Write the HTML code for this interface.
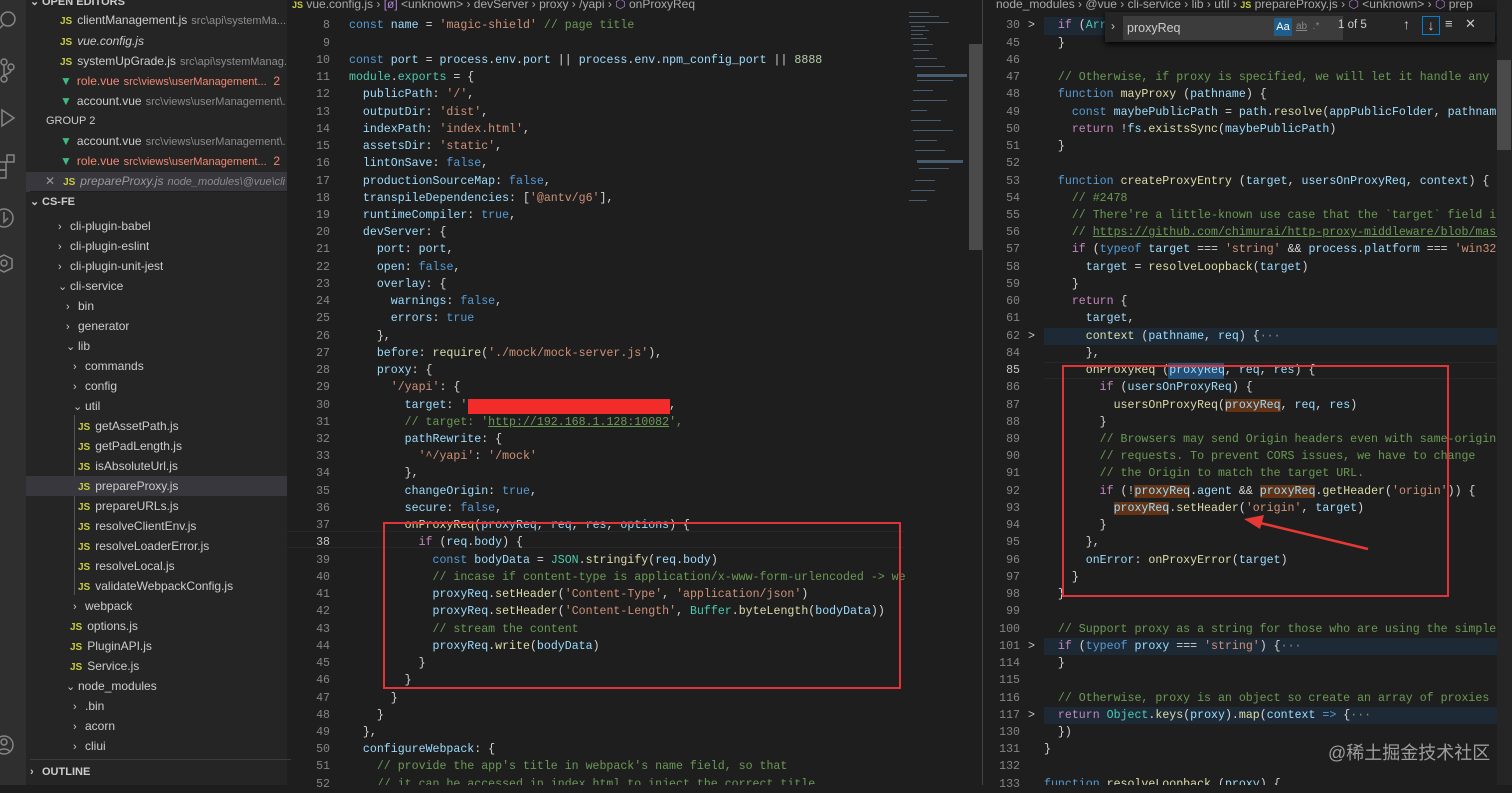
<!DOCTYPE html>
<html><head><meta charset="utf-8">
<style>
*{margin:0;padding:0;box-sizing:border-box}
body{width:1512px;height:785px;overflow:hidden;background:#1e1e1e;position:relative;font-family:"Liberation Sans",sans-serif}
#act{position:absolute;left:0;top:0;width:26px;height:785px;background:#2f2f2f}
#side{position:absolute;left:26px;top:0;width:261px;height:785px;background:#252526;color:#cccccc;font-size:12px}
.r{position:absolute;height:20px;line-height:20px;white-space:nowrap;overflow:hidden}
.js{color:#cbcb41;font-weight:bold;font-size:10px;margin-right:5px}
.v{color:#41b883;font-size:12px;margin-right:5px}
.p{color:#8c8c8c;font-size:11px;margin-left:4px}
.red{color:#f48771}
.ch{color:#c5c5c5;display:inline-block;width:12px;font-size:11px}
.hd{font-weight:bold;font-size:11px}
.ed{position:absolute;font-family:"Liberation Mono",monospace;font-size:11.6px;line-height:17.24px;white-space:pre;color:#d4d4d4}
.g{position:absolute;font-family:"Liberation Mono",monospace;font-size:11.6px;line-height:17.24px;color:#858585;text-align:right;white-space:pre}
.k{color:#569cd6}.c{color:#c586c0}.n{color:#9cdcfe}.s{color:#ce9178}.m{color:#6a9955}.f{color:#dcdcaa}.b{color:#b5cea8}.t{color:#4ec9b0}
.hl{background:#613214}
.bc{position:absolute;top:0;height:12px;font-size:12px;line-height:8px;color:#a9a9a9;white-space:nowrap;overflow:hidden}
.fa{position:absolute;left:1028px;font-family:"Liberation Mono",monospace;font-size:11.6px;line-height:17.24px;color:#c5c5c5}
</style></head><body>
<div id="act">
<svg width="26" height="785" style="position:absolute;left:0;top:0" fill="none" stroke="#858585" stroke-width="1.5">
<circle cx="8" cy="19" r="7"/><line x1="3" y1="25" x2="-2" y2="30"/>
<circle cx="4" cy="62" r="3"/><circle cx="11" cy="67" r="3"/><circle cx="4" cy="79" r="3"/><path d="M4 65v11M11 70c0 4-7 4-7 6"/>
<path d="M2 110l12 8-12 8z"/>
<rect x="-2" y="162" width="8" height="8"/><rect x="-2" y="170" width="8" height="8"/><rect x="7" y="155" width="7" height="7"/>
<circle cx="4" cy="218" r="9"/><path d="M4 212v10l4 -4"/>
<path d="M4 255l8 4v9l-8 4-8-4v-9z"/><circle cx="4" cy="263" r="3"/>
<circle cx="4" cy="745" r="9"/><circle cx="4" cy="742" r="3"/><path d="M-2 752c2-4 10-4 12 0"/>
</svg>
</div>
<div id="side">
<div class="r hd" style="top:-8px;left:4px"><span class="ch">⌄</span>OPEN EDITORS</div>
<div class="r" style="top:10px;left:34px;width:226px"><span class="js">JS</span>clientManagement.js<span class="p">src\api\systemMa...</span></div>
<div class="r" style="top:31px;left:34px"><span class="js">JS</span><i>vue.config.js</i></div>
<div class="r" style="top:51px;left:34px;width:226px"><span class="js">JS</span>systemUpGrade.js<span class="p">src\api\systemManag...</span></div>
<div class="r red" style="top:71px;left:34px"><span class="v">▼</span>role.vue<span class="p red">src\views\userManagement...</span>&nbsp; 2</div>
<div class="r" style="top:91px;left:34px;width:226px"><span class="v">▼</span>account.vue<span class="p">src\views\userManagement\...</span></div>
<div class="r" style="top:111px;left:20px;font-size:11px">GROUP 2</div>
<div class="r" style="top:131px;left:34px;width:226px"><span class="v">▼</span>account.vue<span class="p">src\views\userManagement\...</span></div>
<div class="r red" style="top:151px;left:34px"><span class="v">▼</span>role.vue<span class="p red">src\views\userManagement...</span>&nbsp; 2</div>
<div class="r" style="top:172px;left:0;width:261px;background:#37373d"></div>
<div class="r" style="top:171px;left:19px;width:240px;color:#999"><span style="margin-right:8px">✕</span><span class="js">JS</span><i>prepareProxy.js</i><span class="p"><i>node_modules\@vue\cli-...</i></span></div>
<div class="r hd" style="top:191px;left:4px;width:261px;border-top:1px solid #1e1e1e"><span class="ch">⌄</span>CS-FE</div>
<div class="r" style="top:216px;left:32px"><span class="ch">›</span>cli-plugin-babel</div>
<div class="r" style="top:236px;left:32px"><span class="ch">›</span>cli-plugin-eslint</div>
<div class="r" style="top:256px;left:32px"><span class="ch">›</span>cli-plugin-unit-jest</div>
<div class="r" style="top:276px;left:32px"><span class="ch">⌄</span>cli-service</div>
<div class="r" style="top:296px;left:40px"><span class="ch">›</span>bin</div>
<div class="r" style="top:316px;left:40px"><span class="ch">›</span>generator</div>
<div class="r" style="top:336px;left:40px"><span class="ch">⌄</span>lib</div>
<div class="r" style="top:356px;left:47px"><span class="ch">›</span>commands</div>
<div class="r" style="top:376px;left:47px"><span class="ch">›</span>config</div>
<div class="r" style="top:396px;left:47px"><span class="ch">⌄</span>util</div>
<div style="position:absolute;left:48px;top:415px;width:1px;height:180px;background:#555"></div>
<div class="r" style="top:476px;left:0;width:261px;background:#37373d"></div>
<div class="r" style="top:416px;left:52px"><span class="js">JS</span>getAssetPath.js</div>
<div class="r" style="top:436px;left:52px"><span class="js">JS</span>getPadLength.js</div>
<div class="r" style="top:456px;left:52px"><span class="js">JS</span>isAbsoluteUrl.js</div>
<div class="r" style="top:476px;left:52px"><span class="js">JS</span>prepareProxy.js</div>
<div class="r" style="top:496px;left:52px"><span class="js">JS</span>prepareURLs.js</div>
<div class="r" style="top:516px;left:52px"><span class="js">JS</span>resolveClientEnv.js</div>
<div class="r" style="top:536px;left:52px"><span class="js">JS</span>resolveLoaderError.js</div>
<div class="r" style="top:556px;left:52px"><span class="js">JS</span>resolveLocal.js</div>
<div class="r" style="top:576px;left:52px"><span class="js">JS</span>validateWebpackConfig.js</div>
<div class="r" style="top:596px;left:47px"><span class="ch">›</span>webpack</div>
<div class="r" style="top:616px;left:44px"><span class="js">JS</span>options.js</div>
<div class="r" style="top:636px;left:44px"><span class="js">JS</span>PluginAPI.js</div>
<div class="r" style="top:656px;left:44px"><span class="js">JS</span>Service.js</div>
<div class="r" style="top:676px;left:40px"><span class="ch">⌄</span>node_modules</div>
<div class="r" style="top:696px;left:47px"><span class="ch">›</span>.bin</div>
<div class="r" style="top:716px;left:47px"><span class="ch">›</span>acorn</div>
<div class="r" style="top:736px;left:47px"><span class="ch">›</span>cliui</div>
<div class="r hd" style="top:759px;left:4px;width:261px;height:24px;line-height:24px;border-top:1px solid #3c3c3c"><span class="ch">›</span>OUTLINE</div>
</div>

<!-- left editor -->
<div class="bc" style="left:292px;width:680px"><span style="color:#cbcb41;font-size:9px;font-weight:bold">JS</span> vue.config.js › <span style="color:#b180d7">[ø]</span> &lt;unknown&gt; › devServer › proxy › /yapi › <span style="color:#b180d7">⬡</span> onProxyReq</div>
<div style="position:absolute;left:287px;top:531px;width:618px;height:17px;border-top:1px solid #282828;border-bottom:1px solid #282828"></div>
<div class="g" style="left:290px;top:17.4px;width:40px">8
9
10
11
12
13
14
15
16
17
18
19
20
21
22
23
24
25
26
27
28
29
30
31
32
33
34
35
36
37
<span style="color:#c6c6c6">38</span>
39
40
41
42
43
44
45
46
47
48
49
50
51
52</div>
<div class="ed" style="left:349px;top:17.4px;width:556px;overflow:hidden;height:768px"><span class="k">const</span> <span class="n">name</span> = <span class="s">'magic-shield'</span> <span class="m">// page title</span>

<span class="k">const</span> <span class="n">port</span> = <span class="n">process</span>.<span class="n">env</span>.<span class="n">port</span> || <span class="n">process</span>.<span class="n">env</span>.<span class="n">npm_config_port</span> || <span class="b">8888</span>
<span class="t">module</span>.<span class="t">exports</span> = {
  <span class="n">publicPath</span>: <span class="s">'/'</span>,
  <span class="n">outputDir</span>: <span class="s">'dist'</span>,
  <span class="n">indexPath</span>: <span class="s">'index.html'</span>,
  <span class="n">assetsDir</span>: <span class="s">'static'</span>,
  <span class="n">lintOnSave</span>: <span class="k">false</span>,
  <span class="n">productionSourceMap</span>: <span class="k">false</span>,
  <span class="n">transpileDependencies</span>: [<span class="s">'@antv/g6'</span>],
  <span class="n">runtimeCompiler</span>: <span class="k">true</span>,
  <span class="n">devServer</span>: {
    <span class="n">port</span>: <span class="n">port</span>,
    <span class="n">open</span>: <span class="k">false</span>,
    <span class="n">overlay</span>: {
      <span class="n">warnings</span>: <span class="k">false</span>,
      <span class="n">errors</span>: <span class="k">true</span>
    },
    <span class="n">before</span>: <span class="f">require</span>(<span class="s">'./mock/mock-server.js'</span>),
    <span class="n">proxy</span>: {
      <span class="s">'/yapi'</span>: {
        <span class="n">target</span>: <span class="s">'</span>                             ,
        <span class="m">// target: '<u>http://192.168.1.128:10082</u>',</span>
        <span class="n">pathRewrite</span>: {
          <span class="s">'^/yapi'</span>: <span class="s">'/mock'</span>
        },
        <span class="n">changeOrigin</span>: <span class="k">true</span>,
        <span class="n">secure</span>: <span class="k">false</span>,
        <span class="f">onProxyReq</span>(<span class="n">proxyReq</span>, <span class="n">req</span>, <span class="n">res</span>, <span class="n">options</span>) {
          <span class="c">if</span> (<span class="n">req</span>.<span class="n">body</span>) {
            <span class="k">const</span> <span class="n">bodyData</span> = <span class="t">JSON</span>.<span class="f">stringify</span>(<span class="n">req</span>.<span class="n">body</span>)
            <span class="m">// incase if content-type is application/x-www-form-urlencoded -> we need to change to application/json</span>
            <span class="n">proxyReq</span>.<span class="f">setHeader</span>(<span class="s">'Content-Type'</span>, <span class="s">'application/json'</span>)
            <span class="n">proxyReq</span>.<span class="f">setHeader</span>(<span class="s">'Content-Length'</span>, <span class="t">Buffer</span>.<span class="f">byteLength</span>(<span class="n">bodyData</span>))
            <span class="m">// stream the content</span>
            <span class="n">proxyReq</span>.<span class="f">write</span>(<span class="n">bodyData</span>)
          }
        }
      }
    }
  },
  <span class="n">configureWebpack</span>: {
    <span class="m">// provide the app's title in webpack's name field, so that</span>
    <span class="m">// it can be accessed in index.html to inject the correct title.</span></div>
<div style="position:absolute;left:468px;top:399px;width:202px;height:15px;background:#f22b2b"></div>
<div style="position:absolute;left:383px;top:522px;width:518px;height:167px;border:2px solid #e0343a"></div>
<!-- minimap -->
<svg style="position:absolute;left:905px;top:10px" width="64" height="200" opacity="0.55">
<g fill="#6a8fb0"><rect x="4" y="2" width="20" height="1"/><rect x="4" y="6" width="30" height="1"/><rect x="4" y="12" width="40" height="1"/><rect x="6" y="16" width="14" height="1"/><rect x="6" y="20" width="18" height="1"/><rect x="6" y="24" width="12" height="1"/><rect x="6" y="28" width="16" height="1"/><rect x="8" y="34" width="20" height="1"/><rect x="8" y="40" width="16" height="1"/><rect x="8" y="48" width="24" height="1"/><rect x="10" y="56" width="30" height="1"/><rect x="12" y="64" width="50" height="3"/><rect x="12" y="70" width="36" height="1"/><rect x="8" y="80" width="20" height="1"/><rect x="8" y="90" width="34" height="1"/><rect x="6" y="100" width="16" height="1"/><rect x="6" y="110" width="30" height="1"/><rect x="8" y="120" width="40" height="1"/><rect x="10" y="130" width="22" height="1"/><rect x="10" y="140" width="30" height="1"/><rect x="12" y="150" width="46" height="3"/><rect x="14" y="158" width="30" height="1"/><rect x="10" y="170" width="20" height="1"/><rect x="6" y="180" width="24" height="1"/><rect x="4" y="190" width="18" height="1"/></g></svg>
<div style="position:absolute;left:969px;top:44px;width:13px;height:206px;background:#4a4a4a"></div>
<div style="position:absolute;left:982px;top:0;width:1px;height:785px;background:#444"></div>

<!-- right editor -->
<div class="bc" style="left:996px;width:516px">node_modules › @vue › cli-service › lib › util › <span style="color:#cbcb41;font-size:9px;font-weight:bold">JS</span> prepareProxy.js › <span style="color:#b180d7">⬡</span> &lt;unknown&gt; › <span style="color:#b180d7">⬡</span> prep</div>
<div style="position:absolute;left:1044px;top:17.4px;width:453px;height:17.2px;background:#1d2a36"></div>
<div style="position:absolute;left:1044px;top:327.7px;width:453px;height:17.2px;background:#1d2a36"></div>
<div style="position:absolute;left:1044px;top:362.1px;width:453px;height:17.2px;border-top:1px solid #282828;border-bottom:1px solid #282828"></div>
<div style="position:absolute;left:1044px;top:637.9px;width:453px;height:17.2px;background:#1d2a36"></div>
<div style="position:absolute;left:1044px;top:706.8px;width:453px;height:17.2px;background:#1d2a36"></div>
<div style="position:absolute;left:1168px;top:362.6px;width:56px;height:16px;background:#264f78"></div>
<div class="g" style="left:990px;top:17.4px;width:30px">30
45
46
47
48
49
50
51
52
53
54
55
56
57
58
59
60
61
62
84
<span style="color:#c6c6c6">85</span>
86
87
88
89
90
91
92
93
94
95
96
97
98
99
100
101
114
115
116
117
130
131
132
133</div>
<div class="fa" style="top:17.4px">&gt;</div>
<div class="fa" style="top:327.7px">&gt;</div>
<div class="fa" style="top:638px">&gt;</div>
<div class="fa" style="top:706.8px">&gt;</div>
<div class="ed" style="left:1044px;top:17.4px;width:453px;overflow:hidden;height:768px">  <span class="c">if</span> (<span class="t">Array</span>.<span class="f">isArray</span>(<span class="n">proxy</span>)) {
  }

  <span class="m">// Otherwise, if proxy is specified, we will let it handle any request except for</span>
  <span class="k">function</span> <span class="f">mayProxy</span> (<span class="n">pathname</span>) {
    <span class="k">const</span> <span class="n">maybePublicPath</span> = <span class="n">path</span>.<span class="f">resolve</span>(<span class="n">appPublicFolder</span>, <span class="n">pathname</span>.<span class="f">slice</span>(1))
    <span class="c">return</span> !<span class="n">fs</span>.<span class="f">existsSync</span>(<span class="n">maybePublicPath</span>)
  }

  <span class="k">function</span> <span class="f">createProxyEntry</span> (<span class="n">target</span>, <span class="n">usersOnProxyReq</span>, <span class="n">context</span>) {
    <span class="m">// #2478</span>
    <span class="m">// There're a little-known use case that the `target` field is an object</span>
    <span class="m">// <u>https://github.com/chimurai/http-proxy-middleware/blob/master/README.md</u></span>
    <span class="c">if</span> (<span class="k">typeof</span> <span class="n">target</span> === <span class="s">'string'</span> &amp;&amp; <span class="n">process</span>.<span class="n">platform</span> === <span class="s">'win32'</span>) {
      <span class="n">target</span> = <span class="f">resolveLoopback</span>(<span class="n">target</span>)
    }
    <span class="c">return</span> {
      <span class="n">target</span>,
      <span class="f">context</span> (<span class="n">pathname</span>, <span class="n">req</span>) {<span style="color:#888">···</span>
      },
      <span class="f">onProxyReq</span> (<span class="n">proxyReq</span>, <span class="n">req</span>, <span class="n">res</span>) {
        <span class="c">if</span> (<span class="n">usersOnProxyReq</span>) {
          <span class="f">usersOnProxyReq</span>(<span class="n hl">proxyReq</span>, <span class="n">req</span>, <span class="n">res</span>)
        }
        <span class="m">// Browsers may send Origin headers even with same-origin</span>
        <span class="m">// requests. To prevent CORS issues, we have to change</span>
        <span class="m">// the Origin to match the target URL.</span>
        <span class="c">if</span> (!<span class="n hl">proxyReq</span>.<span class="n">agent</span> &amp;&amp; <span class="n hl">proxyReq</span>.<span class="f">getHeader</span>(<span class="s">'origin'</span>)) {
          <span class="n hl">proxyReq</span>.<span class="f">setHeader</span>(<span class="s">'origin'</span>, <span class="n">target</span>)
        }
      },
      <span class="n">onError</span>: <span class="f">onProxyError</span>(<span class="n">target</span>)
    }
  }

  <span class="m">// Support proxy as a string for those who are using the simple proxy option</span>
  <span class="c">if</span> (<span class="k">typeof</span> <span class="n">proxy</span> === <span class="s">'string'</span>) {<span style="color:#888">···</span>
  }

  <span class="m">// Otherwise, proxy is an object so create an array of proxies to pass to</span>
  <span class="c">return</span> <span class="t">Object</span>.<span class="f">keys</span>(<span class="n">proxy</span>).<span class="f">map</span>(<span class="n">context</span> <span class="k">=&gt;</span> {<span style="color:#888">···</span>
  })
}

<span class="k">function</span> <span class="f">resolveLoopback</span> (<span class="n">proxy</span>) {</div>
<div style="position:absolute;left:1062px;top:365px;width:387px;height:232px;border:2px solid #e0343a"></div>
<svg style="position:absolute;left:1230px;top:505px" width="150" height="50"><path d="M138 44L22 16" stroke="#e53935" stroke-width="2.5"/><path d="M14 14L34 10 30 24z" fill="#e53935"/></svg>
<!-- find widget -->
<div style="position:absolute;left:1105px;top:12px;width:390px;height:30px;background:#252526;box-shadow:0 2px 6px #000"></div>
<div style="position:absolute;left:1111px;top:19px;color:#c5c5c5;font-size:12px">›</div>
<div style="position:absolute;left:1123px;top:16px;width:220px;height:24px;background:#3c3c3c;color:#ccc;font-size:12.5px;line-height:24px;padding-left:4px">proxyReq</div>
<div style="position:absolute;left:1274px;top:18px;width:18px;height:18px;background:#1f5d8a;color:#fff;font-size:11px;text-align:center;line-height:18px">Aa</div>
<div style="position:absolute;left:1296px;top:18px;color:#888;font-size:10px;line-height:18px"><u>ab</u>&nbsp; .*</div>
<div style="position:absolute;left:1338px;top:19px;color:#ccc;font-size:11.5px">1 of 5</div>
<div style="position:absolute;left:1403px;top:16px;color:#ccc;font-size:14px">↑</div>
<div style="position:absolute;left:1422px;top:16px;width:18px;height:19px;border:1px solid #007fd4;color:#ccc;font-size:14px;text-align:center;line-height:17px">↓</div>
<div style="position:absolute;left:1445px;top:16px;color:#ccc;font-size:13px">≡</div>
<div style="position:absolute;left:1465px;top:16px;color:#ccc;font-size:13px">✕</div>
<div style="position:absolute;left:1497px;top:0;width:15px;height:785px;background:#252526"></div>
<div style="position:absolute;left:1497px;top:60px;width:14px;height:90px;background:#4a4a4a"></div>
<div style="position:absolute;left:1328px;top:739px;color:#bdbdbd;opacity:.8;font-size:18px;font-family:'Liberation Sans','Noto Sans CJK SC',sans-serif">@稀土掘金技术社区</div>
</body></html>
